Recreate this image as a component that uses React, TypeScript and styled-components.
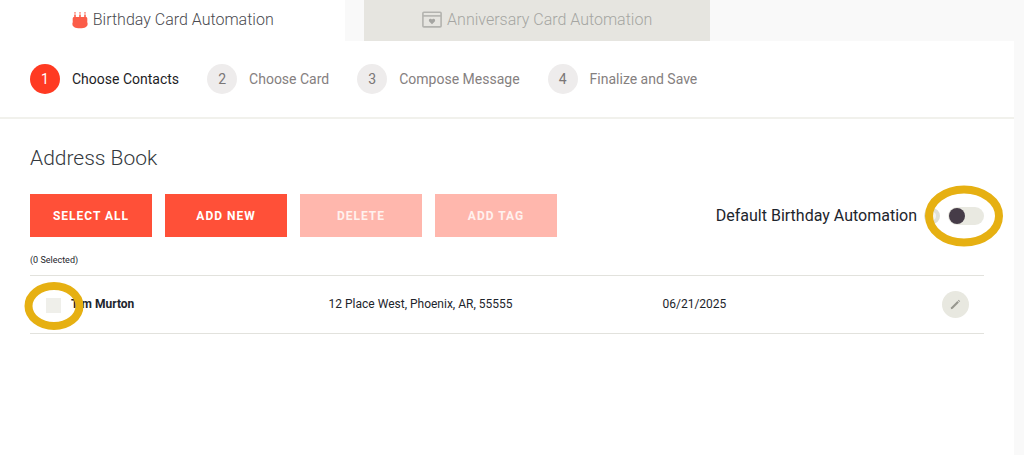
import React, { useState } from "react";
import styled, { createGlobalStyle } from "styled-components";

const GlobalStyle = createGlobalStyle`
  *, *::before, *::after { box-sizing: border-box; }
  body {
    margin: 0;
    background: #f9f9f9;
    color: #1d252c;
    font-family: Roboto, "Liberation Sans", sans-serif;
  }
  button, input { font-family: inherit; }
`;

const Page = styled.div`
  display: flex;
  flex-direction: column;
  min-height: 100vh;
`;

const Tabs = styled.nav`
  display: flex;
  gap: 19px;
  padding-right: 8px;
`;

const Tab = styled.button<{ $active?: boolean }>`
  display: flex;
  align-items: center;
  justify-content: center;
  gap: 5px;
  width: 34%;
  height: 41px;
  padding: 0 0 2px;
  border: 0;
  background: ${(p) => (p.$active ? "#ffffff" : "#e6e5e0")};
  color: ${(p) => (p.$active ? "#4a4a4f" : "#a5a5a2")};
  font-size: 16px;
  font-weight: 300;
  line-height: 20px;
  cursor: pointer;
`;

const Panel = styled.main`
  flex: 1;
  margin-right: 10px;
  background: #ffffff;
`;

const Steps = styled.ol`
  display: flex;
  gap: 28px;
  margin: 0;
  padding: 23px 30px;
  border-bottom: 2px solid #f1f1ec;
  list-style: none;
`;

const Step = styled.li<{ $current?: boolean }>`
  display: flex;
  align-items: center;
  gap: 12px;
  color: ${(p) => (p.$current ? "#1d1d1f" : "#858080")};
  font-size: 14px;
  line-height: 20px;
`;

const StepNumber = styled.span<{ $current?: boolean }>`
  display: grid;
  place-items: center;
  width: 30px;
  height: 30px;
  border-radius: 50%;
  background: ${(p) => (p.$current ? "#ff3a22" : "#eeecec")};
  color: ${(p) => (p.$current ? "#ffffff" : "#7a7676")};
`;

const Book = styled.section`
  padding: 25px 30px;
`;

const Heading = styled.h1`
  margin: 0 0 22px;
  color: #33383d;
  font-size: 21px;
  font-weight: 300;
  line-height: 28px;
`;

const Toolbar = styled.div`
  display: flex;
  align-items: center;
  justify-content: space-between;
`;

const Actions = styled.div`
  display: flex;
  gap: 13px;
`;

const ActionButton = styled.button`
  width: 122px;
  height: 43px;
  padding: 0;
  border: 0;
  background: #ff5038;
  color: #ffffff;
  font-size: 12px;
  font-weight: 700;
  letter-spacing: 1px;
  cursor: pointer;

  &:disabled {
    background: #ffb7ad;
    color: #fff1ee;
    cursor: default;
  }
`;

const Automation = styled.div`
  display: flex;
  align-items: center;
  font-size: 16px;
  line-height: 20px;
`;

const Marked = styled.span`
  position: relative;
  display: block;
  margin-left: 4px;
  padding-left: 4px;
`;

const Ring = styled.svg`
  position: absolute;
  top: 50%;
  left: 50%;
  transform: translate(-50%, -50%);
  overflow: visible;
  pointer-events: none;
`;

const InfoDot = styled.span`
  width: 16px;
  height: 16px;
  margin-left: 7px;
  border: 4px solid #dfe0d8;
  border-radius: 50%;
  background: #f4f4f0;
`;

const Switch = styled.input`
  appearance: none;
  display: block;
  width: 36px;
  height: 18px;
  margin: 0;
  padding: 1px;
  border-radius: 9px;
  background: #e9e9e1;
  cursor: pointer;

  &::before {
    content: "";
    display: block;
    width: 16px;
    height: 16px;
    border-radius: 50%;
    background: #463c48;
  }

  &:checked::before { margin-left: auto; }
`;

const Count = styled.p`
  margin: 15px 0 7px;
  font-size: 9px;
  line-height: 16px;
`;

const Contacts = styled.table`
  width: 100%;
  border-collapse: collapse;
  table-layout: fixed;
  border-bottom: 1px solid #e2e2dd;
  font-size: 12px;
`;

const Row = styled.tr`
  height: 58px;
  border-top: 1px solid #e2e2dd;
`;

const Cell = styled.td<{ $width?: string; $strong?: boolean }>`
  width: ${(p) => p.$width ?? "auto"};
  padding: 0 0 2px;
  font-weight: ${(p) => (p.$strong ? 700 : 400)};
  text-align: left;
`;

const CheckHolder = styled.span`
  position: relative;
  display: block;
  width: 15px;
  height: 15px;
  margin: 4px 0 0 16px;
`;

const Check = styled.input`
  appearance: none;
  display: block;
  width: 15px;
  height: 15px;
  margin: 0;
  background: #efefea;
  cursor: pointer;

  &:checked { background: #463c48; }
`;

const EditButton = styled.button`
  display: grid;
  place-items: center;
  width: 27px;
  height: 27px;
  margin: 2px 15px 0 auto;
  padding: 0;
  border: 0;
  border-radius: 50%;
  background: #e8e8e0;
  cursor: pointer;
`;

const CakeIcon = () => (
  <svg width="16" height="18" viewBox="0 0 16 18" fill="#fb5c48" aria-hidden="true">
    <path d="M2.2 1h1.6v1.8H2.2zM7.2 1h1.6v1.8H7.2zM12.2 1h1.6v1.8h-1.6z" opacity=".65" />
    <path d="M2.2 3.6h1.6V7H2.2zM7.2 3.6h1.6V7H7.2zM12.2 3.6h1.6V7h-1.6z" />
    <path d="M2.2 6h11.6c.9 0 1.5.6 1.5 1.5v2.8c0 .7-.2 1-.4 1.300H1.100C.9 11.300.7 11 .7 10.300V7.500C.7 6.600 1.300 6 2.200 6z" />
    <path d="M.9 11h14.2c.5.6.6 1.300.5 2.200-.2 2.500-2.600 4-7.600 4s-7.400-1.500-7.600-4C.3 12.300.4 11.600.9 11z" />
  </svg>
);

const CardIcon = () => (
  <svg width="20" height="17" viewBox="0 0 20 17" fill="none" stroke="#b3b3af" strokeWidth="1.6" aria-hidden="true">
    <rect x=".9" y="1.3" width="18.2" height="14.6" rx="1" />
    <path d="M1 4.9h18" />
    <path d="M10 13.200 7.200 10.400C5.900 8.700 8.400 6.700 10 8.600 11.600 6.700 14.100 8.700 12.800 10.400z" fill="#a5a5a2" stroke="none" />
  </svg>
);

const PencilIcon = () => (
  <svg width="11" height="11" viewBox="0 0 11 11" fill="#97978f" aria-hidden="true">
    <path d="M.8 10.200 1.200 8.300 7.400 2.100 8.900 3.600 2.700 9.800z" />
    <path d="M7.900 1.600 8.700.800l1.500 1.500-.8.800z" />
  </svg>
);

const HighlightRing = ({ width, height, stroke }: { width: number; height: number; stroke: number }) => (
  <Ring width={width} height={height} aria-hidden="true">
    <ellipse
      cx={width / 2}
      cy={height / 2}
      rx={(width - stroke) / 2}
      ry={(height - stroke) / 2}
      fill="none"
      stroke="#e6b012"
      strokeWidth={stroke}
    />
  </Ring>
);

const steps = ["Choose Contacts", "Choose Card", "Compose Message", "Finalize and Save"];

export default function App() {
  const [selected, setSelected] = useState(false);

  return (
    <Page>
      <GlobalStyle />
      <Tabs>
        <Tab type="button" $active>
          <CakeIcon />
          Birthday Card Automation
        </Tab>
        <Tab type="button">
          <CardIcon />
          Anniversary Card Automation
        </Tab>
      </Tabs>
      <Panel>
        <Steps>
          {steps.map((label, i) => (
            <Step key={label} $current={i === 0}>
              <StepNumber $current={i === 0}>{i + 1}</StepNumber>
              {label}
            </Step>
          ))}
        </Steps>
        <Book>
          <Heading>Address Book</Heading>
          <Toolbar>
            <Actions>
              <ActionButton type="button" onClick={() => setSelected(true)}>SELECT ALL</ActionButton>
              <ActionButton type="button">ADD NEW</ActionButton>
              <ActionButton type="button" disabled={!selected}>DELETE</ActionButton>
              <ActionButton type="button" disabled={!selected}>ADD TAG</ActionButton>
            </Actions>
            <Automation>
              <label htmlFor="automation">Default Birthday Automation</label>
              <InfoDot />
              <Marked>
                <Switch id="automation" type="checkbox" role="switch" />
                <HighlightRing width={78} height={61} stroke={8} />
              </Marked>
            </Automation>
          </Toolbar>
          <Count>({selected ? 1 : 0} Selected)</Count>
          <Contacts>
            <tbody>
              <Row>
                <Cell $width="41px">
                  <CheckHolder>
                    <Check
                      type="checkbox"
                      aria-label="Tim Murton"
                      checked={selected}
                      onChange={(e) => setSelected(e.target.checked)}
                    />
                    <HighlightRing width={59} height={48} stroke={8} />
                  </CheckHolder>
                </Cell>
                <Cell $width="27%" $strong>Tim Murton</Cell>
                <Cell $width="35%">12 Place West, Phoenix, AR, 55555</Cell>
                <Cell>06/21/2025</Cell>
                <Cell $width="60px">
                  <EditButton type="button" aria-label="Edit Tim Murton">
                    <PencilIcon />
                  </EditButton>
                </Cell>
              </Row>
            </tbody>
          </Contacts>
        </Book>
      </Panel>
    </Page>
  );
}
